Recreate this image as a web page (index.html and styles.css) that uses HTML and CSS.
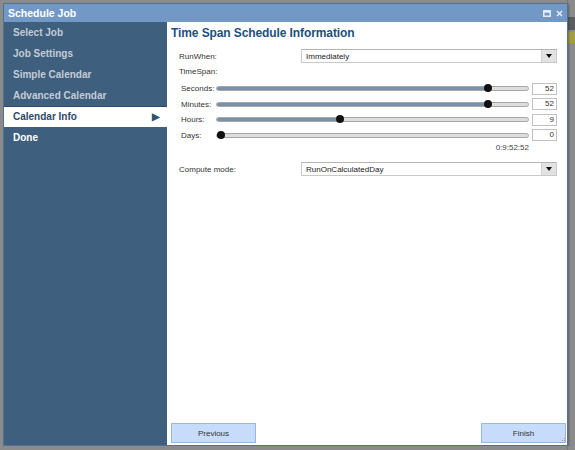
FILE: index.html
```html
<!DOCTYPE html>
<html lang="en">
<head>
  <meta charset="UTF-8" />
  <meta name="viewport" content="width=device-width, initial-scale=1.0"/>
  <title>Schedule Job</title>
  <link rel="stylesheet" href="styles.css">
</head>
<body>

  <div class="page-behind">
    <div class="behind-dark"></div>
    <div class="behind-yellow"></div>
  </div>

  <div class="window">
    <div class="titlebar">
      <span class="title">Schedule Job</span>
      <span class="tools">
        <svg width="8" height="7" viewBox="0 0 8 7"><rect x="0.75" y="0.75" width="6.5" height="5.5" fill="none" stroke="#e3ebf5" stroke-width="1.5"/><rect x="0.75" y="0.75" width="6.5" height="2" fill="#e3ebf5"/></svg>
        <svg width="7" height="7" viewBox="0 0 7 7"><path d="M1 1 L6 6 M6 1 L1 6" stroke="#e3ebf5" stroke-width="1.6"/></svg>
      </span>
    </div>

    <div class="window-body">
      <ul class="steps">
        <li>Select Job</li>
        <li>Job Settings</li>
        <li>Simple Calendar</li>
        <li>Advanced Calendar</li>
        <li class="active">Calendar Info <span class="arrow">&#9654;</span></li>
        <li class="next">Done</li>
      </ul>

      <div class="panel">
        <h2>Time Span Schedule Information</h2>

        <div class="form">
          <div class="row">
            <label>RunWhen:</label>
            <div class="combo"><span>Immediately</span><span class="combo-btn"></span></div>
          </div>

          <div class="row-label">TimeSpan:</div>

          <div class="sliders">
            <div class="slider-row">
              <label>Seconds:</label>
              <div class="track" style="--v: 0.8814"><div class="fill"></div><div class="thumb"></div></div>
              <div class="num">52</div>
            </div>
            <div class="slider-row">
              <label>Minutes:</label>
              <div class="track" style="--v: 0.8814"><div class="fill"></div><div class="thumb"></div></div>
              <div class="num">52</div>
            </div>
            <div class="slider-row">
              <label>Hours:</label>
              <div class="track" style="--v: 0.3913"><div class="fill"></div><div class="thumb"></div></div>
              <div class="num">9</div>
            </div>
            <div class="slider-row">
              <label>Days:</label>
              <div class="track" style="--v: 0"><div class="fill"></div><div class="thumb"></div></div>
              <div class="num">0</div>
            </div>
          </div>

          <div class="total">0:9:52:52</div>

          <div class="row compute">
            <label>Compute mode:</label>
            <div class="combo"><span>RunOnCalculatedDay</span><span class="combo-btn"></span></div>
          </div>
        </div>

        <div class="buttons">
          <button>Previous</button>
          <button>Finish</button>
        </div>

        <svg class="grip" width="6" height="6" viewBox="0 0 6 6">
          <rect x="4" y="0" width="1" height="1" fill="#999"/>
          <rect x="2" y="2" width="1" height="1" fill="#999"/>
          <rect x="4" y="2" width="1" height="1" fill="#999"/>
          <rect x="0" y="4" width="1" height="1" fill="#999"/>
          <rect x="2" y="4" width="1" height="1" fill="#999"/>
          <rect x="4" y="4" width="1" height="1" fill="#999"/>
        </svg>
      </div>
    </div>
  </div>

</body>
</html>
```

FILE: styles.css
```css
body {
  margin: 0;
  background-color: #8b8b8b;
  font-family: "Liberation Sans", Arial, sans-serif;
}

/* bits of the dimmed page behind the dialog */
.page-behind {
  position: absolute;
  top: 0;
  right: 0;
  width: 7px;
  height: 450px;
  border-left: 1px solid #777;
}

.behind-dark {
  height: 13px;
  margin-top: 17px;
  background-color: #5d5d5d;
}

.behind-yellow {
  height: 11px;
  margin-top: 2px;
  background-color: #a39d45;
}

.window {
  position: relative;
  margin: 3px 0 0 3px;
  width: 563px;
  height: 441px;
  border: 1px solid #56718f;
  background-color: #fff;
  display: flex;
  flex-direction: column;
  box-shadow: 1px 1px 2px rgba(0, 0, 0, 0.3);
}

.titlebar {
  height: 18px;
  background-color: #7299c6;
  display: flex;
  align-items: center;
  justify-content: space-between;
  padding: 0 4px 0 4px;
}

.title {
  color: #fff;
  font-weight: bold;
  font-size: 10.5px;
}

.tools {
  display: flex;
  align-items: center;
  gap: 5px;
}

.tools svg {
  display: block;
}

.window-body {
  flex: 1;
  display: flex;
}

.steps {
  list-style: none;
  margin: 0;
  padding: 0;
  width: 163px;
  background-color: #3f5f7e;
}

.steps li {
  height: 21px;
  line-height: 21px;
  padding-left: 9px;
  font-size: 10px;
  font-weight: bold;
  color: #c3ccd6;
}

.steps li.active {
  height: 20px;
  line-height: 20px;
  border-top: 1px solid #274a6e;
  background-color: #fff;
  color: #2c4968;
  display: flex;
  justify-content: space-between;
  padding-right: 7px;
}

.arrow {
  font-size: 10px;
  color: #2f5070;
}

.steps li.next {
  color: #fff;
}

.panel {
  position: relative;
  flex: 1;
  display: flex;
  flex-direction: column;
  padding: 0 1px 2px 4px;
}

h2 {
  margin: 0;
  height: 22px;
  line-height: 22px;
  font-size: 12px;
  font-weight: bold;
  color: #1d4f80;
  letter-spacing: -0.1px;
}

.form {
  padding: 5px 9px 0 8px;
  font-size: 8px;
  color: #333;
}

.row {
  display: flex;
  align-items: center;
  height: 14px;
}

.row label {
  width: 122px;
}

.combo {
  flex: 1;
  height: 12px;
  border: 1px solid #c9c9c9;
  border-top-color: #b5b5b5;
  display: flex;
  align-items: center;
  justify-content: space-between;
  padding-left: 4px;
  color: #222;
}

.combo-btn {
  width: 14px;
  height: 12px;
  background-color: #e2e2e2;
  border-left: 1px solid #d2d2d2;
  position: relative;
}

.combo-btn::after {
  content: "";
  position: absolute;
  left: 4px;
  top: 4px;
  border-left: 3px solid transparent;
  border-right: 3px solid transparent;
  border-top: 4px solid #111;
}

.row-label {
  margin-top: 2px;
  height: 14px;
  line-height: 14px;
}

.sliders {
  margin-top: 2px;
}

.slider-row {
  height: 15.5px;
  display: flex;
  align-items: center;
  padding-left: 2px;
}

.slider-row label {
  width: 35px;
}

.track {
  position: relative;
  width: 311px;
  height: 3px;
  border: 1px solid #a7a7a7;
  border-radius: 3px;
  background-color: #dcdcdc;
}

.fill {
  position: absolute;
  left: 0;
  top: 0;
  bottom: 0;
  width: calc(4px + (100% - 8px) * var(--v));
  background-color: #7b91aa;
  border-radius: 3px 0 0 3px;
}

.thumb {
  position: absolute;
  top: -3px;
  left: calc((100% - 8px) * var(--v));
  width: 8px;
  height: 8px;
  border-radius: 50%;
  background-color: #111;
}

.num {
  margin-left: 3px;
  width: 21px;
  height: 10px;
  line-height: 10px;
  border: 1px solid #c2c2c2;
  text-align: right;
  padding-right: 2px;
  color: #333;
}

.total {
  height: 10px;
  line-height: 10px;
  text-align: right;
  padding-right: 28px;
  color: #444;
}

.compute {
  margin-top: 9px;
}

.buttons {
  margin-top: auto;
  display: flex;
  justify-content: space-between;
}

button {
  width: 85px;
  height: 20px;
  background-color: #c6dcfa;
  border: 1px solid #98b8e0;
  font-family: "Liberation Sans", Arial, sans-serif;
  font-size: 8px;
  color: #333;
  padding: 0;
}

.grip {
  position: absolute;
  right: 1px;
  bottom: 1px;
}
```
